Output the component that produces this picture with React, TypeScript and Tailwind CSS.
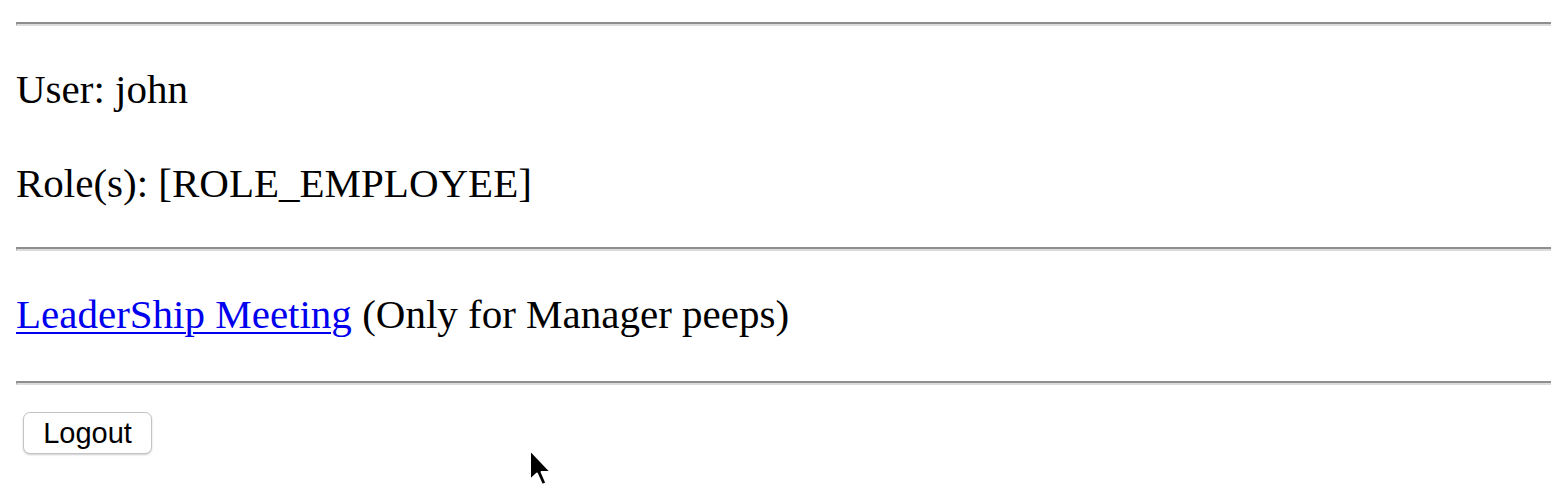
import React from "react";

const Rule: React.FC<{ className?: string }> = ({ className = "" }) => (
  <div
    className={`ml-[16px] h-[4px] border-t-[2px] border-b-[2px] border-l border-t-[#8e8e8e] border-b-[#dcdcdc] border-l-[#9a9a9a] ${className}`}
  />
);

const App: React.FC = () => {
  return (
    <div className="relative w-[1551px] h-[487px] overflow-hidden bg-white text-black font-['Liberation_Serif','Times_New_Roman',serif] text-[41px] leading-[46px]">
      <Rule className="mt-[22px]" />

      <p className="ml-[16px] mt-[40px]">User: john</p>
      <p className="ml-[16px] mt-[48px]">Role(s): [ROLE_EMPLOYEE]</p>

      <Rule className="mt-[41px]" />

      <p className="ml-[16px] mt-[40px]">
        <a href="#" className="text-[#0000ee] underline decoration-[2px] underline-offset-[4px]">
          LeaderShip Meeting
        </a>{" "}
        (Only for Manager peeps)
      </p>

      <Rule className="mt-[44px]" />

      <button
        type="button"
        className="ml-[23px] mt-[27px] flex h-[42px] w-[129px] items-center justify-center rounded-[7px] border border-[#c4c4c4] bg-white shadow-[0_1px_2px_rgba(0,0,0,0.2)] font-['Liberation_Sans','Arial',sans-serif] text-[29px] leading-none text-black"
      >
        Logout
      </button>

      {/* mouse pointer */}
      <svg
        className="absolute left-[528px] top-[448px]"
        width="30"
        height="42"
        viewBox="0 0 15 21"
      >
        <path
          d="M1 1 L1 16 L4.5 12.8 L7 18.5 L9.2 17.6 L6.8 12 L11.5 12 Z"
          fill="#000"
          stroke="#fff"
          strokeWidth="1"
          strokeLinejoin="round"
        />
      </svg>
    </div>
  );
};

export default App;
